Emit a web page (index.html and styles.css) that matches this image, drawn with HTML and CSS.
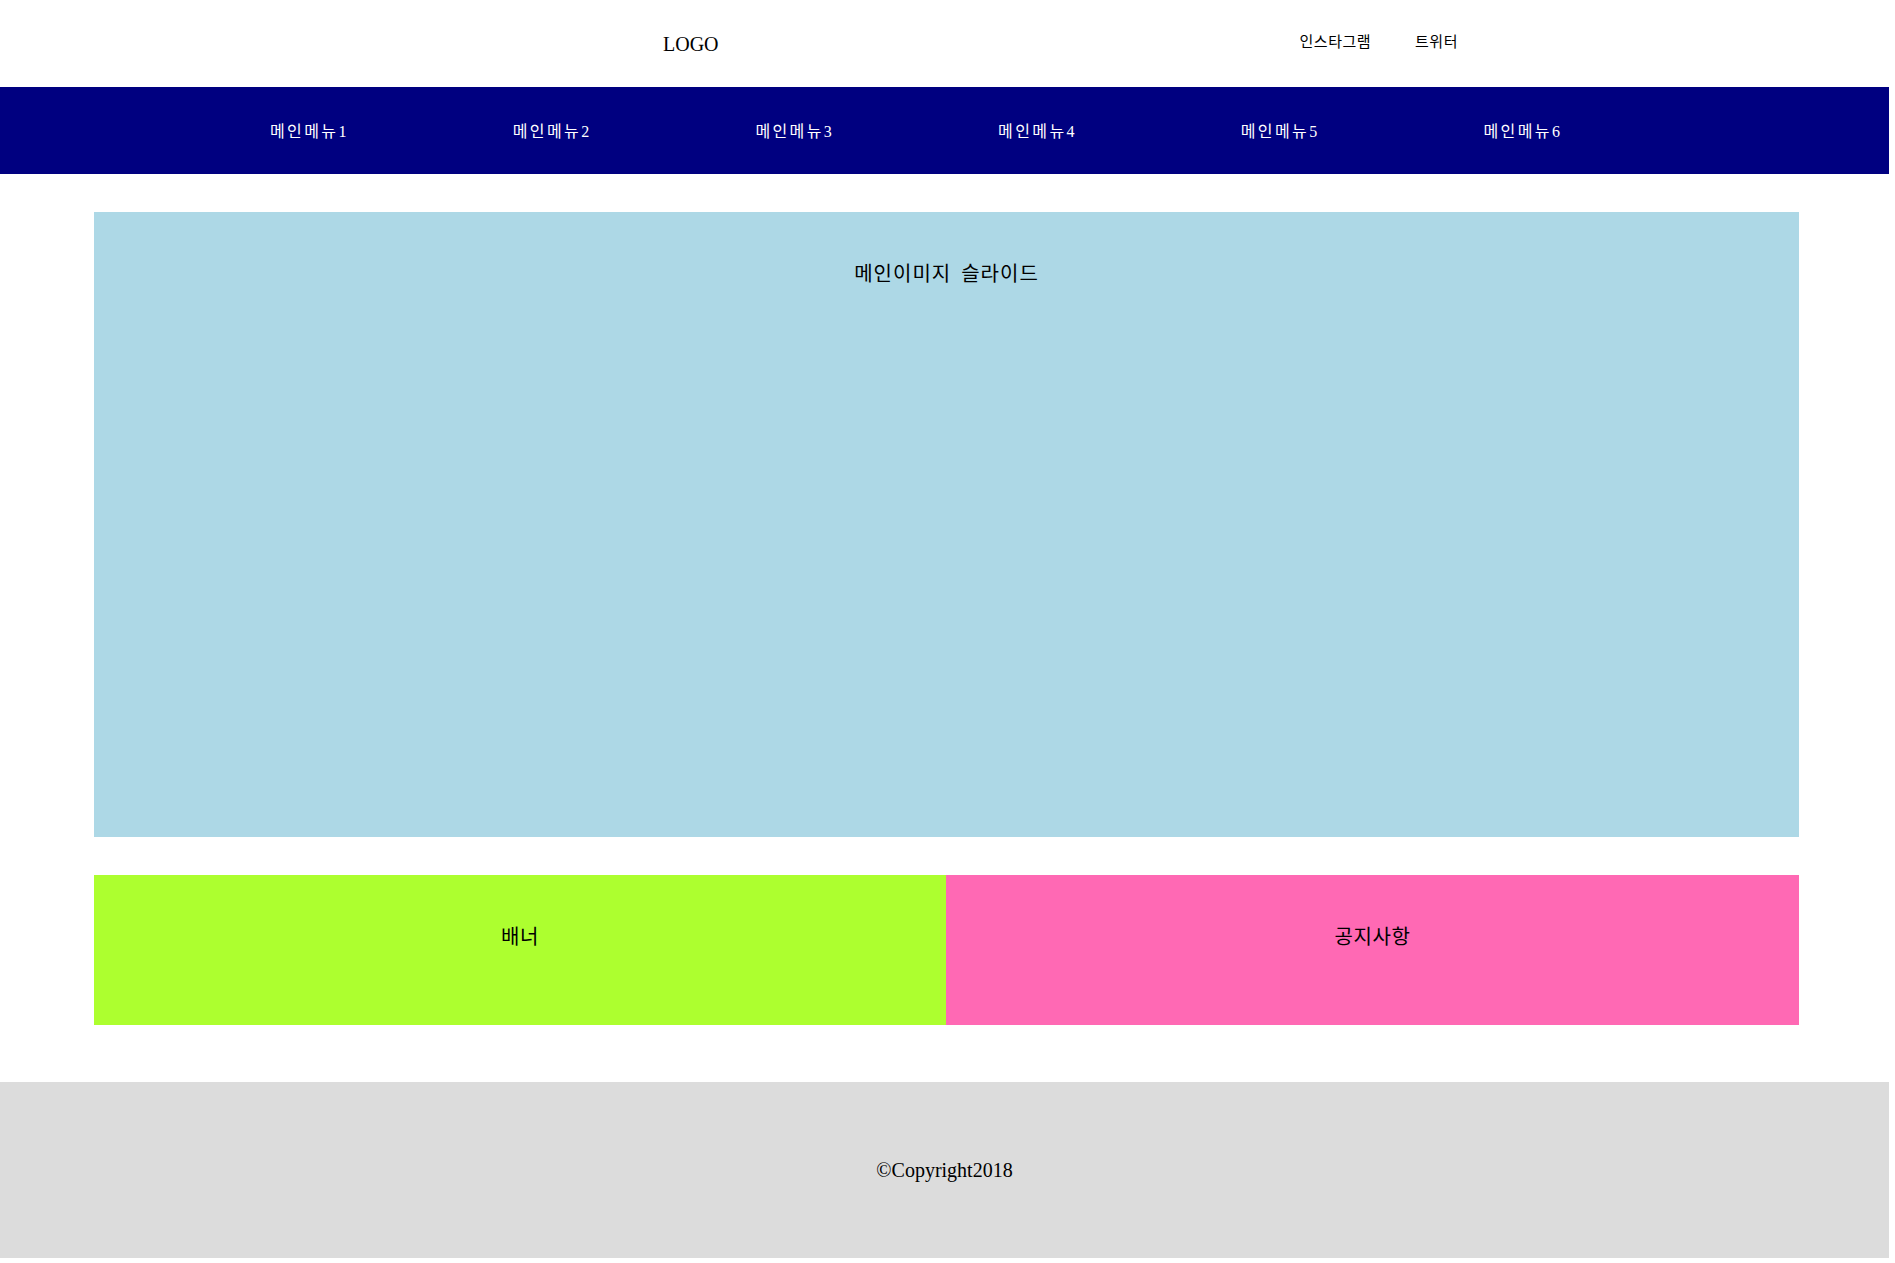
FILE: index.html
```html
<!DOCTYPE html>
<html lang="ko">
<head>
<meta charset="utf-8">
<title>메인</title>
<link rel="stylesheet" href="styles.css">
</head>
<body>
<header class="top">
  <h1 class="logo">LOGO</h1>
  <ul class="sns">
    <li>인스타그램</li>
    <li>트위터</li>
  </ul>
</header>
<nav class="gnb">
  <ul class="gnb-list">
    <li>메인메뉴1</li>
    <li>메인메뉴2</li>
    <li>메인메뉴3</li>
    <li>메인메뉴4</li>
    <li>메인메뉴5</li>
    <li>메인메뉴6</li>
  </ul>
</nav>
<main class="content">
  <section class="slide">메인이미지 슬라이드</section>
  <div class="row">
    <section class="banner">배너</section>
    <section class="notice">공지사항</section>
  </div>
</main>
<footer class="footer">©Copyright2018</footer>
</body>
</html>
```
FILE: styles.css
```css
* { box-sizing: border-box; }
html, body { margin: 0; padding: 0; }
body {
  width: 1889px;
  font-family: "Liberation Serif", "Noto Sans CJK KR", serif;
  color: #000;
  background: #fff;
}
ul { list-style: none; margin: 0; padding: 0; }

.top {
  height: 87px;
  display: flex;
  align-items: center;
}
.logo {
  margin: 0 0 0 663px;
  font-size: 20px;
  font-weight: normal;
  line-height: 24px;
}
.sns {
  display: flex;
  gap: 44px;
  margin-left: 581px;
  margin-bottom: 4px;
  font-size: 15px;
  line-height: 20px;
  letter-spacing: 0.5px;
}

.gnb {
  height: 87px;
  background: #000080;
  display: flex;
  align-items: center;
}
.gnb-list {
  display: flex;
  padding-left: 270px;
  color: #fff;
  font-size: 16px;
  line-height: 20px;
  letter-spacing: 2.4px;
  margin-top: 3px;
}
.gnb-list li { width: 242.7px; }

.content {
  padding: 38px 0 57px;
}
.slide {
  margin-left: 94px;
  width: 1705px;
  height: 625px;
  background: #add8e6;
  text-align: center;
  font-size: 20px;
  line-height: 30px;
  letter-spacing: 1px;
  word-spacing: 4px;
  padding-top: 47px;
}
.row {
  display: flex;
  margin: 38px 0 0 94px;
  width: 1705px;
  height: 150px;
}
.banner, .notice {
  text-align: center;
  font-size: 20px;
  line-height: 30px;
  letter-spacing: 0.6px;
  padding-top: 47px;
}
.banner { width: 852px; background: #adff2f; }
.notice { flex: 1; background: #ff69b4; }

.footer {
  height: 176px;
  background: #dcdcdc;
  display: flex;
  align-items: center;
  justify-content: center;
  font-size: 20px;
  line-height: 24px;
}
```
